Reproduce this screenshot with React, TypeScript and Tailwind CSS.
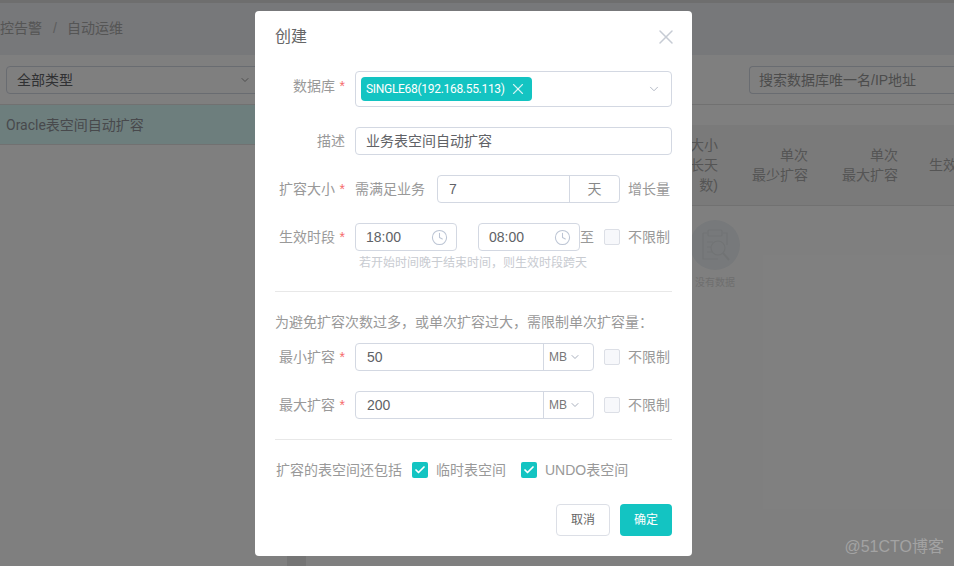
import { Check, ChevronDown, Clock, X } from 'lucide-react'
import type { ReactNode } from 'react'

const FONT = 'font-["Liberation_Sans","Noto_Sans_CJK_SC",sans-serif]'

function Field({ label, required, children, className = '', labelClass = '' }: { label: string; required?: boolean; children: ReactNode; className?: string; labelClass?: string }) {
  return (
    <div className={`flex items-center ${className}`}>
      <div className={`w-[80px] shrink-0 pr-[10px] flex justify-end text-[14px] text-[#999] ${labelClass}`}>
        <span>{label}</span>
        <span className={`w-[10px] text-right text-[#f56c6c] ${required ? '' : 'hidden'}`}>*</span>
      </div>
      {children}
    </div>
  )
}

function Unlimited() {
  return (
    <div className="flex items-center">
      <span className="w-4 h-4 rounded-[2px] border border-[#dcdfe6] bg-[#f7f8fb]" />
      <span className="ml-2 text-[14px] text-[#999]">不限制</span>
    </div>
  )
}

function TimeBox({ value }: { value: string }) {
  return (
    <div className="w-[102px] h-[28px] rounded-[4px] border border-[#d3d8e2] pl-[10px] pr-[8px] flex items-center justify-between text-[14px] text-[#606266]">
      <span>{value}</span>
      <Clock className="w-[17px] h-[17px] text-[#bcc5d4]" strokeWidth={1.5} />
    </div>
  )
}

function SizeInput({ value }: { value: string }) {
  return (
    <div className="w-[239px] h-[28px] rounded-[4px] border border-[#d3d8e2] flex items-center text-[14px] text-[#606266]">
      <span className="flex-1 pl-[11px]">{value}</span>
      <div className="w-[50px] h-full border-l border-[#d3d8e2] flex items-center pl-[5px] text-[12px] text-[#777] gap-[2px]">
        MB
        <ChevronDown className="w-3 h-3 text-[#a8afbd]" />
      </div>
    </div>
  )
}

function CheckedBox({ label }: { label: string }) {
  return (
    <div className="flex items-center">
      <span className="w-4 h-4 rounded-[2px] bg-[#13c4c2] flex items-center justify-center">
        <Check className="w-3 h-3 text-white" strokeWidth={3.5} />
      </span>
      <span className="ml-2 text-[14px] text-[#999]">{label}</span>
    </div>
  )
}

function Dialog() {
  return (
    <div className="absolute left-[255px] top-[11px] w-[437px] h-[545px] bg-white rounded-[4px] px-5 pt-[16px]">
      <div className="flex items-center justify-between h-5">
        <span className="text-[16px] text-[#666]">创建</span>
        <X className="w-6 h-6 text-[#c6cbd4] mr-[-6px]" strokeWidth={1.5} />
      </div>

      <Field label="数据库" required className="mt-[24px]" labelClass="mb-[5px]">
        <div className="flex-1 h-9 rounded-[4px] border border-[#d3d8e2] pl-[5px] pr-[10px] flex items-center justify-between">
          <span className="h-6 w-[171px] rounded-[4px] bg-[#13c4c2] pl-[5px] flex items-center text-[12px] tracking-[-0.3px] text-white font-['Roboto',sans-serif]">
            SINGLE68(192.168.55.113)
            <X className="ml-[4px] w-[18px] h-[18px] shrink-0 text-white/80" strokeWidth={1.5} />
          </span>
          <ChevronDown className="w-[14px] h-[14px] text-[#a8afbd]" strokeWidth={1.5} />
        </div>
      </Field>

      <Field label="描述" className="mt-5">
        <div className="flex-1 h-7 rounded-[4px] border border-[#d3d8e2] pl-[10px] flex items-center text-[14px] text-[#606266]">
          业务表空间自动扩容
        </div>
      </Field>

      <Field label="扩容大小" required className="mt-5">
        <span className="text-[14px] text-[#999] w-[82px] shrink-0">需满足业务</span>
        <div className="w-[183px] h-7 rounded-[4px] border border-[#d3d8e2] flex items-center text-[14px] text-[#606266]">
          <span className="flex-1 pl-[11px]">7</span>
          <span className="w-[50px] h-full border-l border-[#d3d8e2] flex items-center justify-center text-[#888]">天</span>
        </div>
        <span className="ml-2 text-[14px] text-[#999]">增长量</span>
      </Field>

      <Field label="生效时段" required className="mt-5">
        <TimeBox value="18:00" />
        <div className="ml-[21px]">
          <TimeBox value="08:00" />
        </div>
        <span className="text-[14px] text-[#999]">至</span>
        <div className="ml-[10px]">
          <Unlimited />
        </div>
      </Field>
      <p className="ml-[84px] h-6 leading-6 text-[12px] text-[#c8cbd1]">若开始时间晚于结束时间，则生效时段跨天</p>

      <div className="mt-4 h-px bg-[#e8e8e8]" />

      <p className="mt-[20px] h-5 leading-5 text-[14px] text-[#999]">为避免扩容次数过多，或单次扩容过大，需限制单次扩容量：</p>

      <Field label="最小扩容" required className="mt-[11px]">
        <SizeInput value="50" />
        <div className="ml-[10px]">
          <Unlimited />
        </div>
      </Field>
      <Field label="最大扩容" required className="mt-5">
        <SizeInput value="200" />
        <div className="ml-[10px]">
          <Unlimited />
        </div>
      </Field>

      <div className="mt-5 h-px bg-[#e8e8e8]" />

      <div className="mt-[20px] h-5 flex items-center">
        <span className="text-[14px] text-[#999] ml-[1px]">扩容的表空间还包括</span>
        <div className="ml-[10px]">
          <CheckedBox label="临时表空间" />
        </div>
        <div className="ml-[15px]">
          <CheckedBox label="UNDO表空间" />
        </div>
      </div>

      <div className="mt-[24px] flex justify-end gap-[10px]">
        <button className="w-[54px] h-8 rounded-[4px] border border-[#dcdfe6] text-[12px] text-[#666]">取消</button>
        <button className="w-[52px] h-8 rounded-[4px] bg-[#13c4c2] text-[12px] text-white">确定</button>
      </div>
    </div>
  )
}

function EmptyIcon() {
  return (
    <svg viewBox="0 0 50 54" className="w-[50px] h-[54px]" fill="none" stroke="#e2e6e9" strokeWidth="1.2">
      <circle cx="25" cy="27" r="25" fill="#eef3f6" stroke="none" />
      <path d="M13 15h4M33 15h4v12M13 15v26h15" />
      <rect x="18" y="12" width="14" height="6" rx="1" />
      <circle cx="28" cy="30" r="7" />
      <path d="M33 35l6 7" strokeWidth="2" />
      <path d="M17 24h6M17 29h4M17 34h5" />
    </svg>
  )
}

function Page() {
  return (
    <div className="min-h-[566px] bg-white">
      <div className="h-[3px] bg-[#dcdcdc]" />
      <div className="h-[52px] bg-[#eef0f4] pb-[2px] flex items-center text-[14px] text-[#aaa] ml-[-14px]">
        <span>监控告警</span>
        <span className="ml-[11px] mr-[10px] text-[#bbb]">/</span>
        <span>自动运维</span>
      </div>
      <div className="h-[50px] flex items-center justify-between border-b border-[#e3e3e3] pl-[6px]">
        <div className="w-[254px] h-7 rounded-[4px] border border-[#d3d8e2] pt-[1px] pl-[10px] pr-2 flex items-center justify-between text-[14px] text-[#606266]">
          全部类型
          <ChevronDown className="w-3 h-3 text-[#999]" />
        </div>
        <div className="w-[205px] h-7 rounded-l-[4px] border border-r-0 border-[#d3d8e2] pt-[1px] pl-[9px] flex items-center text-[14px] text-[#999]">
          搜索数据库唯一名/IP地址
        </div>
      </div>
      <div className="flex h-[461px]">
        <div className="w-[287px] shrink-0">
          <div className="h-[40px] bg-[#dbfdfb] border-b border-[#e3e3e3] pt-[1px] pl-[6px] flex items-center text-[14px] text-[#909399] font-['Roboto','Noto_Sans_CJK_SC',sans-serif]">
            Oracle表空间自动扩容
          </div>
        </div>
        <div className="w-[19px] shrink-0 bg-[#ebebeb]" />
        <div className="flex-1 pt-[20px]">
          <div className="h-[81px] bg-[#f5f5f5] border-b border-[#e3e3e3] flex items-center text-[14px] leading-5 text-[#aaa]">
            <div className="w-[412px] shrink-0 text-right">
              <div>大小</div>
              <div>长天</div>
              <div>数)</div>
            </div>
            <div className="w-[90px] shrink-0 text-right">
              <div>单次</div>
              <div>最少扩容</div>
            </div>
            <div className="w-[90px] shrink-0 text-right">
              <div>单次</div>
              <div>最大扩容</div>
            </div>
            <div className="ml-[31px] whitespace-nowrap">生效时段</div>
          </div>
          <div className="ml-[384px] mt-[12px] w-[50px] flex flex-col items-center">
            <EmptyIcon />
            <span className="mt-[3px] text-[10px] text-[#ddd] whitespace-nowrap">没有数据</span>
          </div>
        </div>
      </div>
    </div>
  )
}

export default function App() {
  return (
    <div className={`relative h-[566px] w-[954px] overflow-hidden ${FONT}`}>
      <Page />
      <div className="absolute inset-0 bg-black/50" />
      <Dialog />
      <span className="absolute right-[10px] top-[537px] text-[16px] leading-5 text-[#a3a3a3]">@51CTO博客</span>
    </div>
  )
}
